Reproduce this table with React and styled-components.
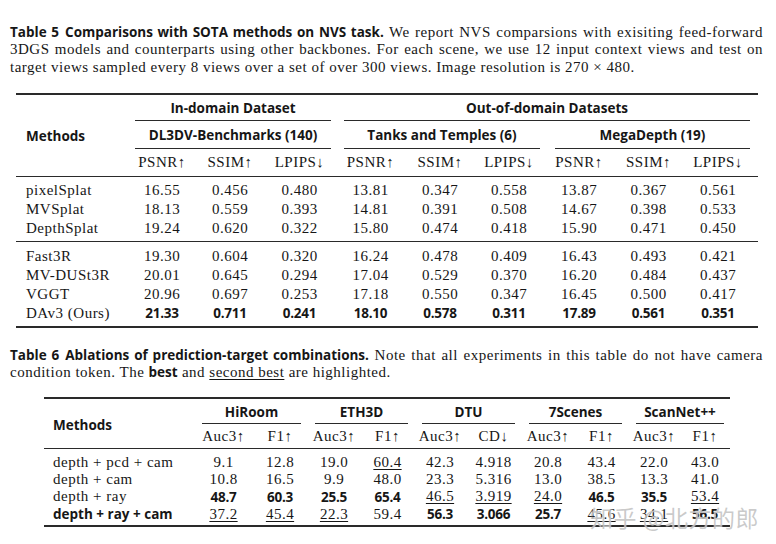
import React from "react";
import styled, { createGlobalStyle } from "styled-components";

const serif = `"Liberation Serif", "DejaVu Serif", serif`;
const sans = `"Open Sans", Lato, "Noto Sans", sans-serif`;
const ink = "#161616";
const rule = "#2a2a2a";

const GlobalStyle = createGlobalStyle`
  html, body { margin: 0; background: #fff; }
  body { color: ${ink}; font-family: ${serif}; letter-spacing: 0.5px; }
`;

const Page = styled.div`
  position: relative;
  width: 776px;
  height: 544px;
  box-sizing: border-box;
  padding: 24px 13px 0 10px;
  overflow: hidden;
`;

const Caption = styled.div`
  font-size: 15px;
  line-height: 17.3px;
  margin-top: ${(p) => p.$top || 0}px;
`;

const Line = styled.div`
  white-space: nowrap;
  text-align: ${(p) => (p.$last ? "left" : "justify")};
  text-align-last: ${(p) => (p.$last ? "left" : "justify")};
`;

const Title = styled.span`
  font-family: ${sans};
  font-weight: 700;
  font-size: 13.5px;
  letter-spacing: 0;
`;

const TableNo = styled.span`
  margin-right: 6px;
`;

const Strong = styled.span`
  font-family: ${sans};
  font-weight: 700;
  font-size: 13.5px;
  letter-spacing: 0;
`;

const Under = styled.span`
  text-decoration: underline;
  text-decoration-thickness: 1px;
  text-underline-offset: 2px;
`;

const Table = styled.div`
  width: ${(p) => p.$width}px;
  margin: ${(p) => p.$top}px 0 0 ${(p) => p.$left}px;
  border-top: 2px solid ${rule};
  border-bottom: 2px solid ${rule};
`;

const Section = styled.div`
  display: grid;
  grid-template-columns: ${(p) => p.$cols};
  grid-template-rows: ${(p) => p.$rows || "none"};
  grid-auto-rows: ${(p) => p.$rowH || 19}px;
  padding: ${(p) => p.$pad || "0"};
  border-bottom: ${(p) => (p.$rule ? `1px solid ${rule}` : "none")};
  align-items: center;
  font-size: 15px;
`;

const MethodsHead = styled.div`
  grid-row: span ${(p) => p.$rows};
  padding: 2px 0 0 ${(p) => p.$indent}px;
  font-family: ${sans};
  font-weight: 700;
  font-size: 13.5px;
  letter-spacing: 0;
`;

const Group = styled.div`
  grid-column: span ${(p) => p.$span};
  align-self: stretch;
  display: flex;
  align-items: center;
  justify-content: center;
  padding-top: 1px;
  margin: 0 ${(p) => p.$trimR}px 0 ${(p) => p.$trimL}px;
  border-bottom: 1px solid ${rule};
  font-family: ${sans};
  font-weight: 700;
  font-size: 13.5px;
  letter-spacing: 0;
  white-space: nowrap;
`;

const Sub = styled.div`
  text-align: center;
  white-space: nowrap;
`;

const Label = styled.div`
  padding-left: ${(p) => p.$indent}px;
  white-space: nowrap;
  font-family: ${(p) => (p.$b ? sans : serif)};
  font-weight: ${(p) => (p.$b ? 700 : 400)};
  font-size: ${(p) => (p.$b ? "13.5px" : "15px")};
  letter-spacing: ${(p) => (p.$b ? "0" : "0.5px")};
`;

const Num = styled.div`
  text-align: center;
  white-space: nowrap;
  font-family: ${(p) => (p.$b ? sans : serif)};
  font-weight: ${(p) => (p.$b ? 700 : 400)};
  font-size: ${(p) => (p.$b ? "13.5px" : "15px")};
  letter-spacing: ${(p) => (p.$b ? "-0.2px" : "0.5px")};
`;

const Mark = styled.div`
  position: absolute;
  left: 590px;
  top: 500px;
  font-family: "Noto Sans CJK SC", sans-serif;
  font-size: 23px;
  letter-spacing: 0.5px;
  color: rgba(150, 150, 150, 0.5);
  text-shadow: 0 0 1px rgba(255, 255, 255, 0.9);
  white-space: pre;
`;

function Cell({ v }) {
  const b = v.startsWith("*");
  const u = v.startsWith("_");
  const text = b || u ? v.slice(1) : v;
  return <Num $b={b}>{u ? <Under>{text}</Under> : text}</Num>;
}

const cols5 = "112px 68px 68px 71px 71px 68px 70px 70px 69px 70px";
const cols6 = "150px 59px 54px 54px 53px 52px 55px 54px 53px 52px 50px";

const nvsA = [
  ["pixelSplat", "16.55", "0.456", "0.480", "13.81", "0.347", "0.558", "13.87", "0.367", "0.561"],
  ["MVSplat", "18.13", "0.559", "0.393", "14.81", "0.391", "0.508", "14.67", "0.398", "0.533"],
  ["DepthSplat", "19.24", "0.620", "0.322", "15.80", "0.474", "0.418", "15.90", "0.471", "0.450"],
];
const nvsB = [
  ["Fast3R", "19.30", "0.604", "0.320", "16.24", "0.478", "0.409", "16.43", "0.493", "0.421"],
  ["MV-DUSt3R", "20.01", "0.645", "0.294", "17.04", "0.529", "0.370", "16.20", "0.484", "0.437"],
  ["VGGT", "20.96", "0.697", "0.253", "17.18", "0.550", "0.347", "16.45", "0.500", "0.417"],
  ["DAv3 (Ours)", "*21.33", "*0.711", "*0.241", "*18.10", "*0.578", "*0.311", "*17.89", "*0.561", "*0.351"],
];
const metrics5 = ["PSNR↑", "SSIM↑", "LPIPS↓"];

const ablation = [
  ["depth + pcd + cam", "9.1", "12.8", "19.0", "_60.4", "42.3", "4.918", "20.8", "43.4", "22.0", "43.0"],
  ["depth + cam", "10.8", "16.5", "9.9", "48.0", "23.3", "5.316", "13.0", "38.5", "13.3", "41.0"],
  ["depth + ray", "*48.7", "*60.3", "*25.5", "*65.4", "_46.5", "_3.919", "_24.0", "*46.5", "*35.5", "_53.4"],
  ["*depth + ray + cam", "_37.2", "_45.4", "_22.3", "59.4", "*56.3", "*3.066", "*25.7", "_45.6", "_34.1", "*56.5"],
];
const groups6 = [
  ["HiRoom", "Auc3↑", "F1↑"],
  ["ETH3D", "Auc3↑", "F1↑"],
  ["DTU", "Auc3↑", "CD↓"],
  ["7Scenes", "Auc3↑", "F1↑"],
  ["ScanNet++", "Auc3↑", "F1↑"],
];

function Rows({ data, indent }) {
  return data.map((row) => {
    const [name, ...vals] = row;
    const b = name.startsWith("*");
    return (
      <React.Fragment key={name}>
        <Label $indent={indent} $b={b}>{b ? name.slice(1) : name}</Label>
        {vals.map((v, i) => (
          <Cell key={i} v={v} />
        ))}
      </React.Fragment>
    );
  });
}

export default function App() {
  return (
    <Page>
      <GlobalStyle />
      <Caption>
        <Line>
          <Title>
            <TableNo>Table 5</TableNo>Comparisons with SOTA methods on NVS task.
          </Title>{" "}
          We report NVS comparsions with exisiting feed-forward
        </Line>
        <Line>
          3DGS models and counterparts using other backbones. For each scene, we use 12 input context views and test on
        </Line>
        <Line $last>
          target views sampled every 8 views over a set of over 300 views. Image resolution is 270 × 480.
        </Line>
      </Caption>

      <Table $width={742} $top={17} $left={6}>
        <Section $cols={cols5} $rows="26px 28px 27px" $rule>
          <MethodsHead $rows={3} $indent={10}>Methods</MethodsHead>
          <Group $span={3} $trimL={7} $trimR={4}>In-domain Dataset</Group>
          <Group $span={6} $trimL={9} $trimR={3}>Out-of-domain Datasets</Group>
          <Group $span={3} $trimL={7} $trimR={4}>DL3DV-Benchmarks (140)</Group>
          <Group $span={3} $trimL={9} $trimR={4}>Tanks and Temples (6)</Group>
          <Group $span={3} $trimL={11} $trimR={3}>MegaDepth (19)</Group>
          {[0, 1, 2].flatMap((g) =>
            metrics5.map((m) => <Sub key={g + m}>{m}</Sub>)
          )}
        </Section>
        <Section $cols={cols5} $rowH={19} $pad="4px 0 3px" $rule>
          <Rows data={nvsA} indent={10} />
        </Section>
        <Section $cols={cols5} $rowH={19} $pad="5px 0 3px">
          <Rows data={nvsB} indent={10} />
        </Section>
      </Table>

      <Caption $top={19}>
        <Line>
          <Title>
            <TableNo>Table 6</TableNo>Ablations of prediction-target combinations.
          </Title>{" "}
          Note that all experiments in this table do not have camera
        </Line>
        <Line $last>
          condition token. The <Strong>best</Strong> and <Under>second best</Under> are highlighted.
        </Line>
      </Caption>

      <Table $width={686} $top={16} $left={34}>
        <Section $cols={cols6} $rows="25px 24px" $rule>
          <MethodsHead $rows={2} $indent={9}>Methods</MethodsHead>
          {groups6.map(([g]) => (
            <Group key={g} $span={2} $trimL={8} $trimR={6}>{g}</Group>
          ))}
          {groups6.flatMap(([g, a, c]) => [
            <Sub key={g + "a"}>{a}</Sub>,
            <Sub key={g + "c"}>{c}</Sub>,
          ])}
        </Section>
        <Section $cols={cols6} $rowH={17.3} $pad="4px 0 2px">
          <Rows data={ablation} indent={9} />
        </Section>
      </Table>

      <Mark>知乎 @北方的郎</Mark>
    </Page>
  );
}
